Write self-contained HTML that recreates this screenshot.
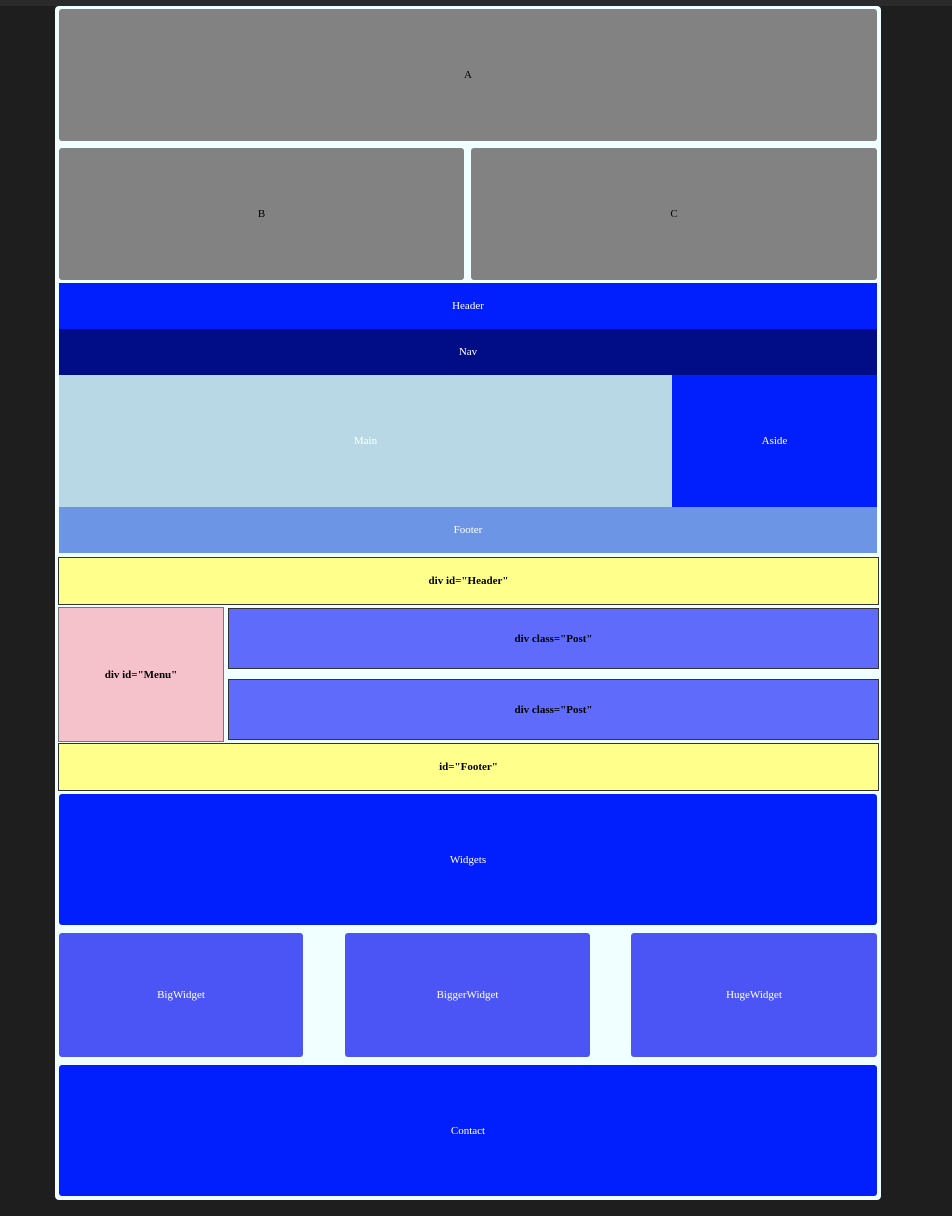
<!DOCTYPE html>
<html><head><style>
body{margin:0;background:#1e1e1e;width:952px;height:1216px;position:relative;overflow:hidden;font-family:"Liberation Serif",serif;font-size:11px}
.top{position:absolute;left:0;top:0;width:952px;height:6px;background:#2a2a2a}
.c{position:absolute;left:55px;top:6px;width:826px;height:1194px;background:#f0ffff;border-radius:4px}
.b{position:absolute;display:flex;align-items:center;justify-content:center;box-sizing:border-box}
.g{background:#828282;border-radius:3px;color:#000}
.w{color:#fff}
.k{font-weight:bold;color:#000;border:1px solid #333}
</style></head><body>
<div class="top"></div>
<div class="c"></div>
<div class="b g" style="left:59px;top:9px;width:818px;height:132px">A</div>
<div class="b g" style="left:59px;top:148px;width:405px;height:132px">B</div>
<div class="b g" style="left:471px;top:148px;width:406px;height:132px">C</div>
<div class="b w" style="left:59px;top:283px;width:818px;height:46px;background:#001ffc">Header</div>
<div class="b w" style="left:59px;top:329px;width:818px;height:46px;background:#000d87">Nav</div>
<div class="b w" style="left:59px;top:375px;width:613px;height:132px;background:#b7d8e4">Main</div>
<div class="b w" style="left:672px;top:375px;width:205px;height:132px;background:#001ffc">Aside</div>
<div class="b w" style="left:59px;top:507px;width:818px;height:46px;background:#6d95e6">Footer</div>
<div class="b k" style="left:58px;top:557px;width:821px;height:48px;background:#ffff8c">div id="Header"</div>
<div class="b k" style="left:58px;top:607px;width:166px;height:135px;background:#f5c2cb;border-color:#777">div id="Menu"</div>
<div class="b k" style="left:228px;top:608px;width:651px;height:61px;background:#5f6bfb">div class="Post"</div>
<div class="b k" style="left:228px;top:679px;width:651px;height:61px;background:#5f6bfb">div class="Post"</div>
<div class="b k" style="left:58px;top:743px;width:821px;height:48px;background:#ffff8c">id="Footer"</div>
<div class="b w" style="left:59px;top:794px;width:818px;height:131px;background:#001ffc;border-radius:3px">Widgets</div>
<div class="b w" style="left:59px;top:933px;width:244px;height:124px;background:#4b55f5;border-radius:3px">BigWidget</div>
<div class="b w" style="left:345px;top:933px;width:245px;height:124px;background:#4b55f5;border-radius:3px">BiggerWidget</div>
<div class="b w" style="left:631px;top:933px;width:246px;height:124px;background:#4b55f5;border-radius:3px">HugeWidget</div>
<div class="b w" style="left:59px;top:1065px;width:818px;height:131px;background:#001ffc;border-radius:3px">Contact</div>
</body></html>
